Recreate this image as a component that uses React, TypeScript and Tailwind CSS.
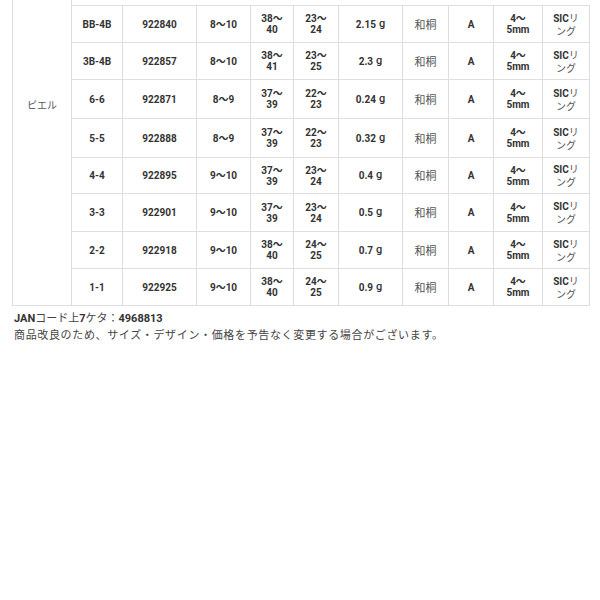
import React from "react";

type Row = {
  size: string;
  jan: string;
  a: string;
  b: [string, string];
  c: [string, string];
  weight: string;
  h: string;
};

/** Spec rows; `h` is the row's box height including its bottom rule. */
const rows: Row[] = [
  { size: "BB-4B", jan: "922840", a: "8～10", b: ["38～", "40"], c: ["23～", "24"], weight: "2.15", h: "h-[37px]" },
  { size: "3B-4B", jan: "922857", a: "8～10", b: ["38～", "41"], c: ["23～", "25"], weight: "2.3", h: "h-[37px]" },
  { size: "6-6", jan: "922871", a: "8～9", b: ["37～", "39"], c: ["22～", "23"], weight: "0.24", h: "h-[39px]" },
  { size: "5-5", jan: "922888", a: "8～9", b: ["37～", "39"], c: ["22～", "23"], weight: "0.32", h: "h-[39px]" },
  { size: "4-4", jan: "922895", a: "9～10", b: ["37～", "39"], c: ["23～", "24"], weight: "0.4", h: "h-[36px]" },
  { size: "3-3", jan: "922901", a: "9～10", b: ["37～", "39"], c: ["23～", "24"], weight: "0.5", h: "h-[38px]" },
  { size: "2-2", jan: "922918", a: "9～10", b: ["38～", "40"], c: ["24～", "25"], weight: "0.7", h: "h-[37px]" },
  { size: "1-1", jan: "922925", a: "9～10", b: ["38～", "40"], c: ["24～", "25"], weight: "0.9", h: "h-[37px]" },
];

const font = "font-['Roboto','Noto_Sans_CJK_JP',sans-serif]";
const jp = "font-['Noto_Sans_CJK_JP',sans-serif]";

function Cell({ children, className = "" }: { children: React.ReactNode; className?: string }) {
  return (
    <div
      className={`flex items-center justify-center border-r border-[#dedede] text-center ${className}`}
    >
      {children}
    </div>
  );
}

function Stack({ top, bottom }: { top: string; bottom: string }) {
  return (
    <div className="flex flex-col items-center leading-[11px]">
      <span>{top}</span>
      <span>{bottom}</span>
    </div>
  );
}

export default function App() {
  return (
    <div className={`w-[600px] h-[600px] bg-white ${font} text-[#333]`}>
      <div className="flex pl-[12px]">
        {/* series name cell – it continues above the crop */}
        <div className="h-[306px] w-[60px] border-x border-b border-[#dedede] pt-[92px] text-center">
          <span className={`${jp} text-[10px] leading-[16px] text-[#555]`}>ピエル</span>
        </div>

        <div className="mt-[5px] border-t border-[#dedede]">
          {rows.map((r) => (
            <div
              key={r.jan}
              className={`grid ${r.h} grid-cols-[51px_74px_54px_43px_45px_64px_46px_45px_49px_47px] border-b border-[#dedede] text-[10px] font-bold`}
            >
              <Cell>{r.size}</Cell>
              <Cell>{r.jan}</Cell>
              <Cell>{r.a}</Cell>
              <Cell>
                <Stack top={r.b[0]} bottom={r.b[1]} />
              </Cell>
              <Cell>
                <Stack top={r.c[0]} bottom={r.c[1]} />
              </Cell>
              <Cell>
                {r.weight}
                <span className="ml-[3px] font-medium text-[11px]">g</span>
              </Cell>
              <Cell className={`${jp} text-[11px] font-normal text-[#555]`}>和桐</Cell>
              <Cell>A</Cell>
              <Cell>
                <Stack top="4～" bottom="5mm" />
              </Cell>
              <Cell>
                <div className="flex flex-col items-center leading-[12px]">
                  <span className="leading-[12px]">
                    SIC<span className={`${jp} font-normal text-[#555] leading-[12px]`}>リ</span>
                  </span>
                  <span className={`${jp} font-normal text-[#555] leading-[12px]`}>ング</span>
                </div>
              </Cell>
            </div>
          ))}
        </div>
      </div>

      <div className="px-[14px] pt-[4px] text-[11px] leading-[15px]">
        <p>
          <span className="font-bold">JAN</span>
          <span className={`${jp} text-[#444]`}>コード上</span>
          <span className="font-bold">7</span>
          <span className={`${jp} text-[#444]`}>ケタ：</span>
          <span className="font-bold">4968813</span>
        </p>
        <p className={`${jp} mt-[1px] tracking-[0.65px] text-[#444]`}>
          商品改良のため、サイズ・デザイン・価格を予告なく変更する場合がございます。
        </p>
      </div>
    </div>
  );
}
